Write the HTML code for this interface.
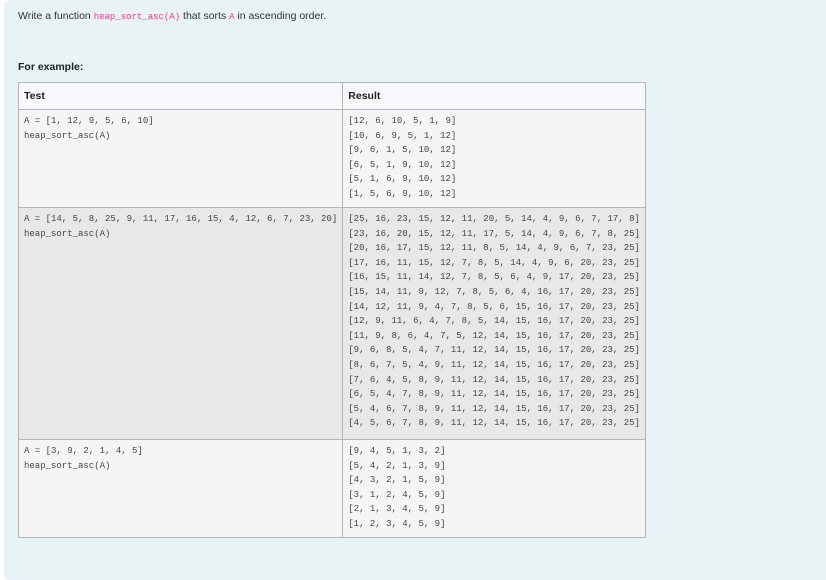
<!DOCTYPE html>
<html><head><style>
body{margin:0;width:826px;height:569px;background:#fff;overflow:hidden;font-family:"Liberation Sans",sans-serif;}
.panel{position:absolute;left:4px;top:0;width:830px;height:580px;background:#e7f3f5;border-radius:6px;}
.q{position:absolute;left:18px;top:10px;font-size:10.5px;color:#333;}
code{font-family:"Liberation Mono",monospace;font-size:9px;color:#e83e8c;}
.fe{position:absolute;left:18px;top:61px;font-size:10.5px;font-weight:bold;color:#222;}
table{position:absolute;left:18px;top:82px;border-collapse:collapse;width:626px;}
td,th{border:1px solid #b5b5b5;vertical-align:top;text-align:left;padding:0 5px;}
th{height:26px;background:#f8f9fc;font-size:10.5px;color:#222;padding-top:0;vertical-align:middle;}
td{font-family:"Liberation Mono",monospace;font-size:9px;color:#444;line-height:14.6px;padding-top:4px;white-space:pre;}
tr.a td{background:#f5f5f5;}
tr.b td{background:#e8e8e8;}
</style></head><body>
<div class="panel"></div>
<div class="q">Write a function <code>heap_sort_asc(A)</code> that sorts <code>A</code> in ascending order.</div>
<div class="fe">For example:</div>
<table>
<tr><th style="width:313px">Test</th><th>Result</th></tr>
<tr class="a"><td style="height:93px">A = [1, 12, 9, 5, 6, 10]
heap_sort_asc(A)</td><td>[12, 6, 10, 5, 1, 9]
[10, 6, 9, 5, 1, 12]
[9, 6, 1, 5, 10, 12]
[6, 5, 1, 9, 10, 12]
[5, 1, 6, 9, 10, 12]
[1, 5, 6, 9, 10, 12]</td></tr>
<tr class="b"><td style="height:227px">A = [14, 5, 8, 25, 9, 11, 17, 16, 15, 4, 12, 6, 7, 23, 20]
heap_sort_asc(A)</td><td>[25, 16, 23, 15, 12, 11, 20, 5, 14, 4, 9, 6, 7, 17, 8]
[23, 16, 20, 15, 12, 11, 17, 5, 14, 4, 9, 6, 7, 8, 25]
[20, 16, 17, 15, 12, 11, 8, 5, 14, 4, 9, 6, 7, 23, 25]
[17, 16, 11, 15, 12, 7, 8, 5, 14, 4, 9, 6, 20, 23, 25]
[16, 15, 11, 14, 12, 7, 8, 5, 6, 4, 9, 17, 20, 23, 25]
[15, 14, 11, 9, 12, 7, 8, 5, 6, 4, 16, 17, 20, 23, 25]
[14, 12, 11, 9, 4, 7, 8, 5, 6, 15, 16, 17, 20, 23, 25]
[12, 9, 11, 6, 4, 7, 8, 5, 14, 15, 16, 17, 20, 23, 25]
[11, 9, 8, 6, 4, 7, 5, 12, 14, 15, 16, 17, 20, 23, 25]
[9, 6, 8, 5, 4, 7, 11, 12, 14, 15, 16, 17, 20, 23, 25]
[8, 6, 7, 5, 4, 9, 11, 12, 14, 15, 16, 17, 20, 23, 25]
[7, 6, 4, 5, 8, 9, 11, 12, 14, 15, 16, 17, 20, 23, 25]
[6, 5, 4, 7, 8, 9, 11, 12, 14, 15, 16, 17, 20, 23, 25]
[5, 4, 6, 7, 8, 9, 11, 12, 14, 15, 16, 17, 20, 23, 25]
[4, 5, 6, 7, 8, 9, 11, 12, 14, 15, 16, 17, 20, 23, 25]</td></tr>
<tr class="a"><td style="height:93px">A = [3, 9, 2, 1, 4, 5]
heap_sort_asc(A)</td><td>[9, 4, 5, 1, 3, 2]
[5, 4, 2, 1, 3, 9]
[4, 3, 2, 1, 5, 9]
[3, 1, 2, 4, 5, 9]
[2, 1, 3, 4, 5, 9]
[1, 2, 3, 4, 5, 9]</td></tr>
</table>
</body></html>
